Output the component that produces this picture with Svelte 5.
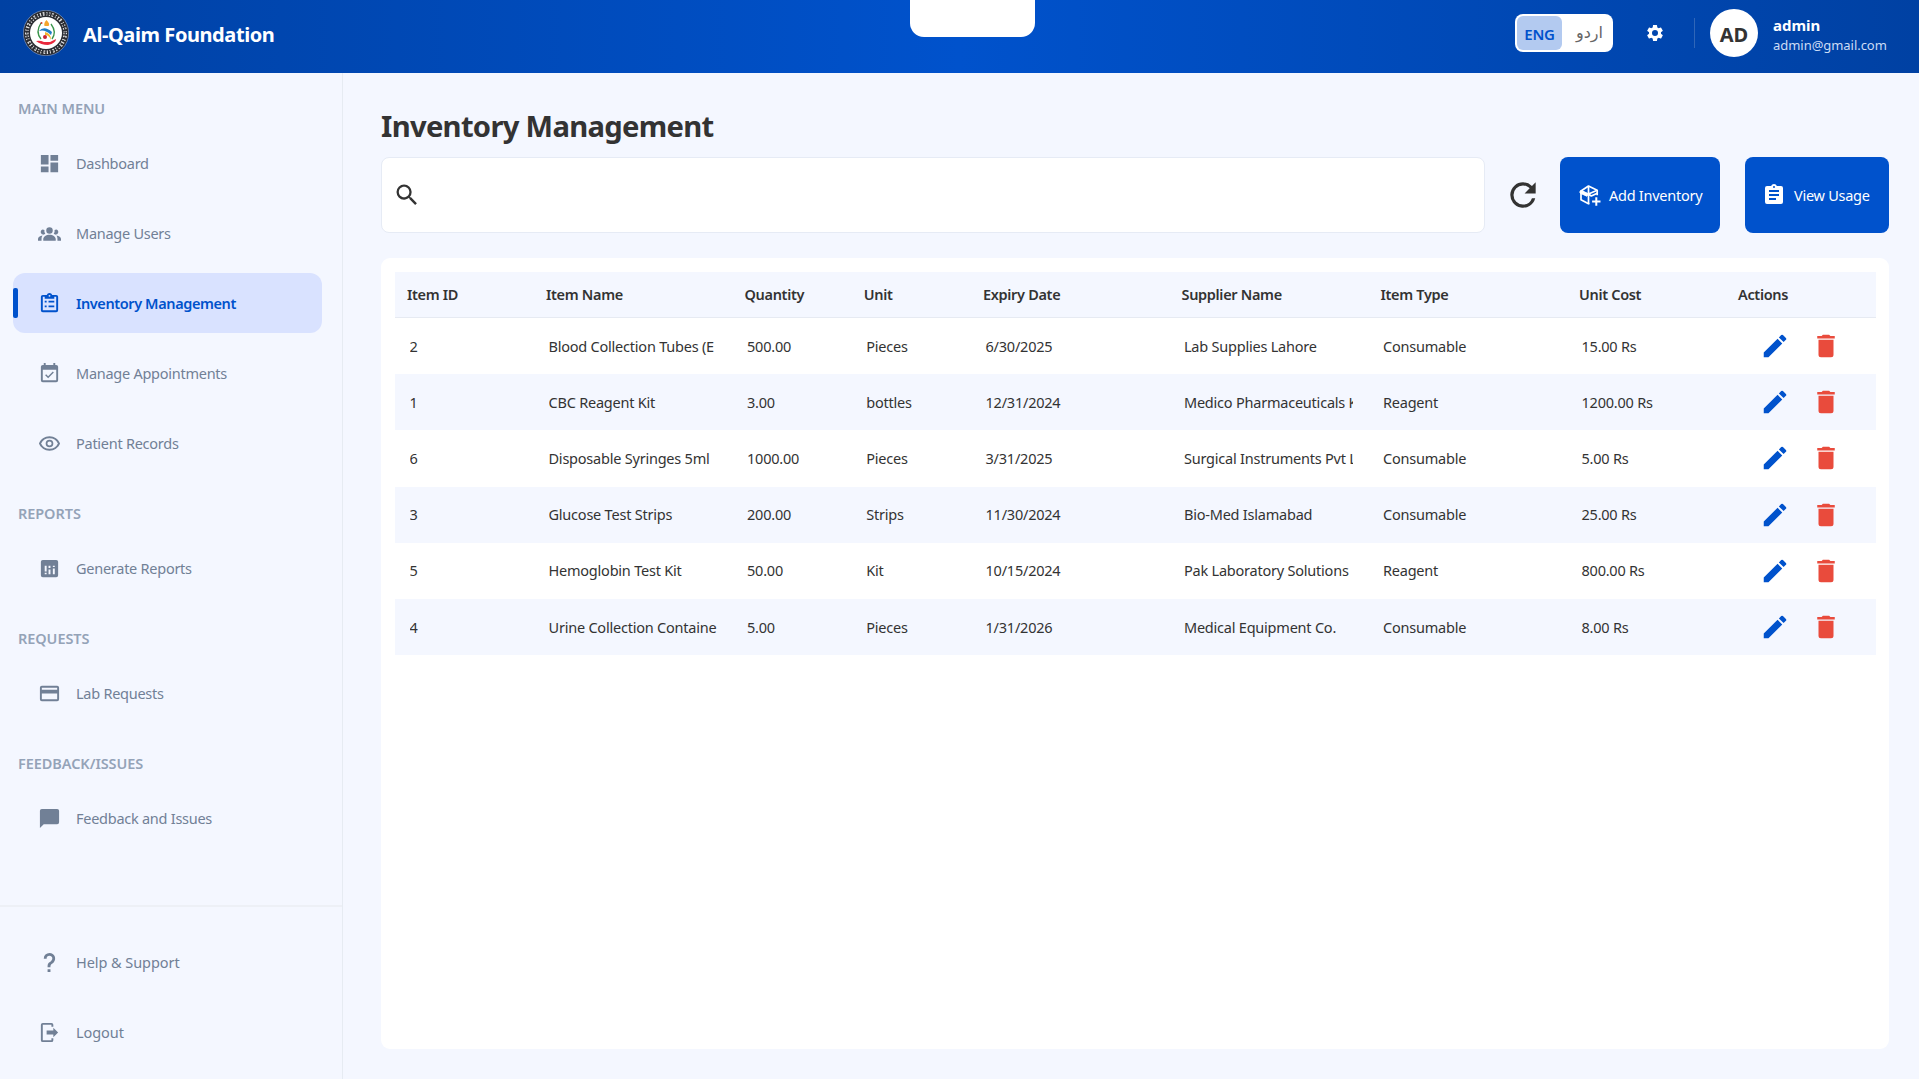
<script lang="ts">
  const icons: Record<string, string> = {
    dashboard: 'M13 3v6h8V3h-8zm0 18h8V11h-8v10zM3 21h8v-6H3v6zm0-8h8V3H3v10z',
    users: 'M12 5.400a3.400 3.400 0 1 1 0 6.800 3.400 3.400 0 0 1 0-6.800zM4.800 7.700c.7 0 1.400.25 1.900.65a5 5 0 0 0 .9 4A2.800 2.800 0 1 1 4.800 7.700zm14.400 0a2.800 2.800 0 1 1-2.800 4.650 5 5 0 0 0 .9-4c.5-.4 1.200-.65 1.900-.65zM5.500 19.600v-1.800c0-2.600 2.900-4.600 6.500-4.600s6.500 2 6.500 4.600v1.800h-13zM0 19.600v-1.800c0-1.700 1.900-3.300 4.700-3.600-.7.9-1 2-1 3.300v2.100H0zm24 0h-3.700v-2.100c0-1.300-.3-2.400-1-3.300 2.800.3 4.700 1.900 4.700 3.600v1.800z',
    inventory: 'M19 3h-4.180C14.400 1.840 13.300 1 12 1S9.600 1.840 9.180 3H5a2 2 0 0 0-2 2v14a2 2 0 0 0 2 2h14a2 2 0 0 0 2-2V5a2 2 0 0 0-2-2zm-7 0a1 1 0 1 1 0 2 1 1 0 0 1 0-2zM7 7h10V5h2v14H5V5h2v2zm0 2h2v2H7V9zm4 0h6v2h-6V9zm-4 5h2v2H7v-2zm4 0h6v2h-6v-2z',
    calendar: 'M19 3h-1V1h-2v2H8V1H6v2H5a2 2 0 0 0-2 2v14a2 2 0 0 0 2 2h14a2 2 0 0 0 2-2V5a2 2 0 0 0-2-2m0 16H5V8h14v11m-2.470-7.940-1.060-1.060-4.880 4.880-2.110-2.110-1.060 1.060L10.590 17l5.940-5.940z',
    eye: 'M12 8a4 4 0 1 1 0 8 4 4 0 0 1 0-8zm0 1.800a2.200 2.200 0 1 0 0 4.400 2.200 2.200 0 0 0 0-4.400zM12 4.500c5 0 9.270 3.110 11 7.500-1.730 4.390-6 7.500-11 7.500S2.730 16.390 1 12c1.730-4.390 6-7.500 11-7.500M3.180 12a9.820 9.820 0 0 0 17.640 0 9.820 9.820 0 0 0-17.640 0z',
    reports: 'M19 3H5a2 2 0 0 0-2 2v14a2 2 0 0 0 2 2h14a2 2 0 0 0 2-2V5a2 2 0 0 0-2-2zM7 9h2v6H7V9zm0 7.500h2V18H7v-1.500zM11 9h2v2.500h-2V9zm0 4h2v5h-2v-5zM15.500 9h2v1.500h-2V9zm0 3h2v6h-2v-6z',
    card: 'M20 4H4c-1.110 0-2 .89-2 2v12a2 2 0 0 0 2 2h16a2 2 0 0 0 2-2V6c0-1.110-.89-2-2-2zm0 14H4v-6h16v6zm0-10H4V6h16v2z',
    chat: 'M20 2H4a2 2 0 0 0-2 2v18l4-4h14a2 2 0 0 0 2-2V4a2 2 0 0 0-2-2z',
    help: 'M10 19h3v3h-3v-3m2-17c5.350.22 7.680 5.620 4.500 9.670-.83 1-2.170 1.660-2.830 2.500C13 15 13 16 13 17h-3c0-1.670 0-3.080.67-4.080.66-1 2-1.590 2.830-2.250C15.920 8.430 15.320 5.260 12 5a3 3 0 0 0-3 3H6a6 6 0 0 1 6-6z',
    logout: 'M16 17v-3H9v-4h7V7l5 5-5 5M14 2a2 2 0 0 1 2 2v2h-2V4H5v16h9v-2h2v2a2 2 0 0 1-2 2H5a2 2 0 0 1-2-2V4a2 2 0 0 1 2-2h9z',
    pencil: 'M3 17.250V21h3.750L17.810 9.940l-3.750-3.750L3 17.250zM20.710 7.040a1 1 0 0 0 0-1.410l-2.340-2.340a1 1 0 0 0-1.410 0l-1.830 1.830 3.750 3.750 1.830-1.830z',
    trash: 'M6 19a2 2 0 0 0 2 2h8a2 2 0 0 0 2-2V7H6v12zM19 4h-3.500l-1-1h-5l-1 1H5v2h14V4z',
    search: 'M15.500 14h-.79l-.28-.27A6.471 6.471 0 0 0 16 9.500 6.500 6.500 0 1 0 9.500 16c1.610 0 3.090-.59 4.230-1.570l.27.28v.79l5 4.990L20.490 19l-4.990-5zm-6 0C7.010 14 5 11.990 5 9.500S7.010 5 9.500 5 14 7.010 14 9.500 11.990 14 9.500 14z',
    refresh: 'M17.650 6.350A7.958 7.958 0 0 0 12 4a8 8 0 1 0 7.730 10h-2.080A5.990 5.990 0 0 1 12 18a6 6 0 1 1 0-12c1.660 0 3.140.69 4.220 1.780L13 11h7V4l-2.350 2.350z',
    gear: 'M19.140 12.940c.04-.3.060-.61.060-.94s-.02-.64-.07-.94l2.030-1.580a.49.49 0 0 0 .12-.61l-1.920-3.320a.488.488 0 0 0-.59-.22l-2.390.96c-.5-.38-1.030-.7-1.620-.94l-.36-2.540a.484.484 0 0 0-.48-.41h-3.840c-.24 0-.43.17-.47.41l-.36 2.540c-.59.24-1.130.57-1.620.94l-2.390-.96c-.22-.08-.47 0-.59.22L2.740 8.870c-.12.21-.08.47.12.61l2.030 1.580c-.05.3-.09.63-.09.94s.02.64.07.94l-2.030 1.580a.49.49 0 0 0-.12.61l1.920 3.320c.12.22.37.29.59.22l2.390-.96c.5.38 1.030.7 1.620.94l.36 2.540c.05.24.24.41.48.41h3.840c.24 0 .44-.17.47-.41l.36-2.540c.59-.24 1.130-.56 1.620-.94l2.390.96c.22.08.47 0 .59-.22l1.920-3.320a.49.49 0 0 0-.12-.61l-2.010-1.580zM12 15.600A3.600 3.600 0 1 1 12 8.400a3.600 3.600 0 0 1 0 7.200z',
    usage: 'M19 3h-4.180C14.400 1.840 13.300 1 12 1S9.600 1.840 9.180 3H5a2 2 0 0 0-2 2v14a2 2 0 0 0 2 2h14a2 2 0 0 0 2-2V5a2 2 0 0 0-2-2zm-7 0a1 1 0 1 1 0 2 1 1 0 0 1 0-2zm2 14H7v-2h7v2zm3-4H7v-2h10v2zm0-4H7V7h10v2z'
  };

  const sections = [
    { label: 'MAIN MENU', items: [
      { icon: 'dashboard', text: 'Dashboard' },
      { icon: 'users', text: 'Manage Users' },
      { icon: 'inventory', text: 'Inventory Management', active: true },
      { icon: 'calendar', text: 'Manage Appointments' },
      { icon: 'eye', text: 'Patient Records' }
    ] },
    { label: 'REPORTS', items: [{ icon: 'reports', text: 'Generate Reports' }] },
    { label: 'REQUESTS', items: [{ icon: 'card', text: 'Lab Requests' }] },
    { label: 'FEEDBACK/ISSUES', items: [{ icon: 'chat', text: 'Feedback and Issues' }] }
  ];
  const footer = [
    { icon: 'help', text: 'Help & Support' },
    { icon: 'logout', text: 'Logout' }
  ];

  const columns = ['Item ID', 'Item Name', 'Quantity', 'Unit', 'Expiry Date', 'Supplier Name', 'Item Type', 'Unit Cost', 'Actions'];
  const rows = [
    ['2', 'Blood Collection Tubes (E', '500.00', 'Pieces', '6/30/2025', 'Lab Supplies Lahore', 'Consumable', '15.00 Rs'],
    ['1', 'CBC Reagent Kit', '3.00', 'bottles', '12/31/2024', 'Medico Pharmaceuticals K', 'Reagent', '1200.00 Rs'],
    ['6', 'Disposable Syringes 5ml', '1000.00', 'Pieces', '3/31/2025', 'Surgical Instruments Pvt L', 'Consumable', '5.00 Rs'],
    ['3', 'Glucose Test Strips', '200.00', 'Strips', '11/30/2024', 'Bio-Med Islamabad', 'Consumable', '25.00 Rs'],
    ['5', 'Hemoglobin Test Kit', '50.00', 'Kit', '10/15/2024', 'Pak Laboratory Solutions', 'Reagent', '800.00 Rs'],
    ['4', 'Urine Collection Containe', '5.00', 'Pieces', '1/31/2026', 'Medical Equipment Co.', 'Consumable', '8.00 Rs']
  ];
</script>

{#snippet icon(name: string, cls: string)}
  <svg class={cls} viewBox="0 0 24 24" fill="currentColor" fill-rule="evenodd" aria-hidden="true"><path d={icons[name]} /></svg>
{/snippet}

{#snippet navItem(item: { icon: string; text: string; active?: boolean })}
  <a class="item" class:active={item.active} href="#top">
    {@render icon(item.icon, 'nav-icon')}
    <span>{item.text}</span>
  </a>
{/snippet}

<div class="app">
  <header>
    <svg class="logo" viewBox="0 0 46 46" aria-hidden="true">
      <circle cx="23" cy="23" r="22.700" fill="#2b2d33" stroke="#8ea4cf" stroke-width=".6" />
      <circle cx="23" cy="23" r="19.200" fill="none" stroke="#fff" stroke-width="3.600" stroke-dasharray="1.300 1.500 1.800 2 1 1.700" opacity=".85" />
      <circle cx="23" cy="23" r="19.200" fill="none" stroke="#2b2d33" stroke-width="1.200" stroke-dasharray="2 1.700" />
      <circle cx="23" cy="23" r="16" fill="#fff" />
      <path d="M18 13q-6 9 0 16M28 14q6 8 1 15" fill="none" stroke="#39944a" stroke-width="1.300" />
      <path d="M23.500 10q4 4 2 6h-4q-1-3 2-6z" fill="#f5a42c" />
      <circle cx="18.500" cy="13" r="1" fill="#d23a2e" />
      <path d="M16 21q5-6 13 1l-1 3q-6-6-12-4z" fill="#1f7dc4" />
      <path d="M22 22q6 1 6 8-2-5-6-5z" fill="#f5b52c" />
      <circle cx="22" cy="27" r="2" fill="#c92232" />
      <path d="M13 31q4-1 8 1h6l6-3q0 4-8 6-7 0-12-4z" fill="#e8283c" />
    </svg>
    <strong class="brand">Al-Qaim Foundation</strong>
    <div class="notch"></div>
    <div class="lang">
      <span class="eng">ENG</span>
      <span class="urdu" lang="ur">اردو</span>
    </div>
    {@render icon('gear', 'gear')}
    <div class="sep"></div>
    <div class="avatar">AD</div>
    <div class="who">
      <b>admin</b>
      <span>admin@gmail.com</span>
    </div>
  </header>

  <div class="body">
    <aside>
      <nav>
        {#each sections as s}
          <div class="label">{s.label}</div>
          {#each s.items as item}{@render navItem(item)}{/each}
        {/each}
      </nav>
      <div class="bottom">
        {#each footer as item}{@render navItem(item)}{/each}
      </div>
    </aside>

    <main>
      <h1>Inventory Management</h1>
      <div class="tools">
        <div class="search">{@render icon('search', 'search-icon')}</div>
        {@render icon('refresh', 'refresh')}
        <button class="add">
          <svg class="btn-icon" viewBox="0 0 24 24" fill="none" stroke="currentColor" stroke-width="1.700" stroke-linejoin="round" aria-hidden="true">
            <path d="M12.500 20.500 11.500 20.800 4 16.800V8L11.500 3l8.700 4.300v5" />
            <path d="M3 8.200 4.500 7.500 11.500 10.800 9.800 13.200 3 10z" fill="currentColor" stroke-width="1" />
            <path d="M11.500 3v8l8.700-3.700M11.500 11v9.800M11.500 11l2.800 2 6-2.800" />
            <path d="M19.300 14.300v8.400M15.100 18.500h8.400" stroke-width="2" />
          </svg>
          <span>Add Inventory</span>
        </button>
        <button class="view">{@render icon('usage', 'btn-icon')}<span>View Usage</span></button>
      </div>

      <section class="card">
        <div class="row head">
          {#each columns as c}<div class="cell">{c}</div>{/each}
        </div>
        {#each rows as r}
          <div class="row data">
            {#each r as v}<div class="cell"><span class="clip">{v}</span></div>{/each}
            <div class="cell actions">
              {@render icon('pencil', 'edit')}
              {@render icon('trash', 'delete')}
            </div>
          </div>
        {/each}
      </section>
    </main>
  </div>
</div>

<style>
  :global(body) { margin: 0; }
  .app {
    height: 1079px; display: flex; flex-direction: column; overflow: hidden;
    background: #f4f7ff; color: #333; font: 14.500px/20px "Segoe UI", "Noto Sans", sans-serif; letter-spacing: -.22px;
  }
  .app :global(svg) { display: block; flex: none; }
  header {
    position: relative; height: 73px; flex: none; box-sizing: border-box; display: flex; align-items: center;
    padding: 0 31px 7px 23px; color: #fff;
    background: linear-gradient(90deg, #0041a3, #0052cc 50%, #0041a3);
  }
  .logo { width: 46px; height: 46px; }
  .brand { margin-left: 14px; font-size: 20px; letter-spacing: -.42px; padding-top: 4px; }
  .notch {
    position: absolute; left: 910px; top: 0; width: 125px; height: 37px; background: #fff;
    border-radius: 0 0 14px 14px;
  }
  .lang {
    margin-left: auto; width: 98px; height: 38px; box-sizing: border-box; padding: 2px; border-radius: 8px;
    background: #fff; display: flex;
  }
  .eng, .urdu { display: flex; align-items: center; justify-content: center; }
  .eng { width: 45px; border-radius: 6px; background: #b3caf0; color: #0052cc; font-weight: 600; font-size: 15px; padding-top: 2px; box-sizing: border-box; }
  .urdu { flex: 1; color: #666; font: 16px "DejaVu Sans", sans-serif; letter-spacing: 0; padding: 0 0 2px 6px; }
  .gear { width: 20px; height: 20px; margin-left: 32px; }
  .sep { width: 1px; height: 30px; margin: 0 15px 0 29px; background: #2f66b8; }
  .avatar {
    width: 48px; height: 48px; border-radius: 50%; background: #fff; color: #333; display: flex; letter-spacing: 0;
    align-items: center; justify-content: center; font-size: 20px; font-weight: 700; padding-top: 3px; box-sizing: border-box;
  }
  .who { margin-left: 15px; width: 115px; display: flex; flex-direction: column; padding-top: 4px; letter-spacing: -.04px; }
  .who b { font-size: 15px; }
  .who span { font-size: 13px; color: #ccdcf5; }

  .body { flex: 1; min-height: 0; display: flex; }
  aside { width: 343px; box-sizing: border-box; border-right: 1px solid #e6ebf2; display: flex; flex-direction: column; }
  nav { padding: 5px 20px 0 13px; flex: 1; }
  .label {
    height: 55px; box-sizing: border-box; padding: 20px 0 0 5px; color: #94a3b8; font-weight: 600; letter-spacing: -.07px;
  }
  .item {
    height: 60px; margin-bottom: 10px; display: flex; align-items: center; padding-left: 25px; border-radius: 12px;
    color: #718096; text-decoration: none; position: relative; letter-spacing: -.26px;
  }
  .item span { margin-left: 15px; padding-bottom: 1px; }
  :global(.nav-icon) { width: 23px; height: 23px; }
  .active { background: #d9e2ff; color: #0052cc; font-weight: 600; letter-spacing: -.4px; }
  .active::before { content: ""; position: absolute; left: 0; top: 15px; width: 5px; height: 30px; border-radius: 2px; background: #0052cc; }
  .bottom { height: 174px; box-sizing: border-box; border-top: 2px solid #edf0f6; padding: 25px 20px 0 13px; }
  .bottom .item { letter-spacing: -.06px; }

  main { flex: 1; min-width: 0; padding: 33px 30px 30px 38px; display: flex; flex-direction: column; }
  h1 { margin: 0; height: 51px; line-height: 40px; font-size: 29.200px; font-weight: 700; letter-spacing: -.7px; }
  .tools { height: 76px; display: flex; align-items: center; flex: none; }
  .search {
    flex: 1; height: 76px; box-sizing: border-box; border: 1px solid #e6ebf5; border-radius: 8px; background: #fff;
    display: flex; align-items: center; padding-left: 11px;
  }
  :global(.search-icon) { width: 28px; height: 28px; }
  :global(.refresh) { width: 38px; height: 38px; margin: 0 18px 0 19px; }
  button {
    height: 76px; border: 0; border-radius: 8px; background: #0052cc; color: #fff; font: inherit; letter-spacing: -.26px; display: flex;
    align-items: center; padding: 0 0 0 17px;
  }
  .add { width: 160px; }
  .view { width: 144px; margin-left: 25px; }
  .btn-icon { width: 24px; height: 24px; }
  button span { margin-left: 8px; white-space: nowrap; }

  .card { flex: 1; margin-top: 25px; background: #fff; border-radius: 9px; padding: 14px 13px 0 14px; }
  .row { display: grid; grid-template-columns: 139px 198.500px 119.300px 119.200px 198.500px 199px 198.500px 159px 138px; padding-left: 12px; }
  .head { height: 46px; box-sizing: border-box; background: #f4f7ff; border-bottom: 1px solid #e6eaf2; font-weight: 600; align-items: center; letter-spacing: -.32px; padding-bottom: 1px; }
  .data { height: 56.200px; align-items: center; }
  .data:nth-child(odd) { background: #f4f7ff; }
  .clip { display: block; margin: 0 27px 1px 2.500px; overflow: hidden; white-space: nowrap; }
  .actions { display: flex; align-items: center; padding-left: 22px; }
  :global(.edit) { width: 30px; height: 30px; color: #0052cc; }
  :global(.delete) { width: 30px; height: 30px; margin-left: 21px; color: #e94b3c; }
</style>
